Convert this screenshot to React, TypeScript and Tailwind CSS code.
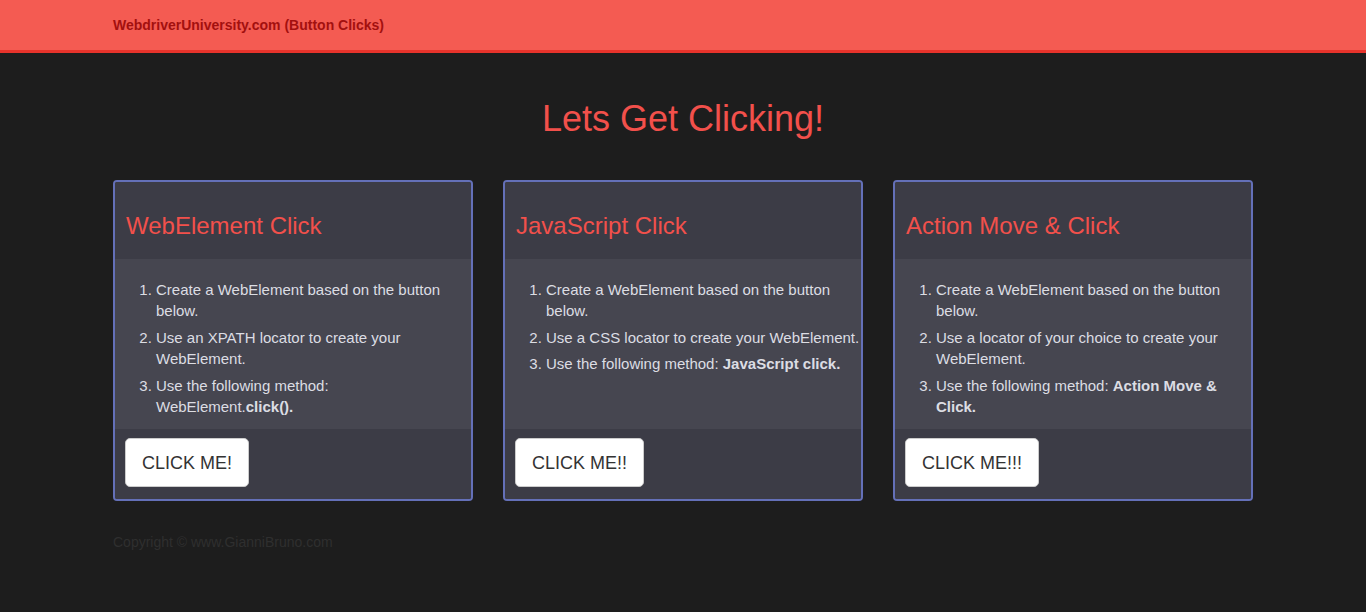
import React from "react";

type Card = {
  title: string;
  items: React.ReactNode[];
  button: string;
};

const cards: Card[] = [
  {
    title: "WebElement Click",
    items: [
      "Create a WebElement based on the button below.",
      "Use an XPATH locator to create your WebElement.",
      <>
        Use the following method:
        <br />
        WebElement.<b>click().</b>
      </>,
    ],
    button: "CLICK ME!",
  },
  {
    title: "JavaScript Click",
    items: [
      "Create a WebElement based on the button below.",
      "Use a CSS locator to create your WebElement.",
      <>
        Use the following method: <b>JavaScript click.</b>
      </>,
    ],
    button: "CLICK ME!!",
  },
  {
    title: "Action Move & Click",
    items: [
      "Create a WebElement based on the button below.",
      "Use a locator of your choice to create your WebElement.",
      <>
        Use the following method: <b>Action Move &amp; Click.</b>
      </>,
    ],
    button: "CLICK ME!!!",
  },
];

export default function App() {
  return (
    <div
      className="min-h-[612px] bg-[#1d1d1d]"
      style={{ fontFamily: '"Liberation Sans", Arial, sans-serif' }}
    >
      <nav className="h-[53px] bg-[#f45b52] border-b-[3px] border-[#e8332b]">
        <div className="w-[1140px] mx-auto h-[50px] flex items-center">
          <span className="text-[14px] font-bold text-[#a3100f]">
            WebdriverUniversity.com (Button Clicks)
          </span>
        </div>
      </nav>

      <div className="w-[1140px] mx-auto">
        <h1 className="text-center text-[36px] leading-[40px] text-[#f2504b] mt-[46px] mb-[41px]">
          Lets Get Clicking!
        </h1>

        <div className="grid grid-cols-3 gap-[30px]">
          {cards.map((c) => (
            <div
              key={c.title}
              className="border-2 border-[#6470b8] rounded-[4px] bg-[#3c3c46] flex flex-col overflow-hidden"
            >
              <div className="h-[77px] pt-[31px] pl-[11px] bg-[#3c3c46]">
                <h2 className="text-[24px] leading-[26px] text-[#f2504b]">{c.title}</h2>
              </div>
              <div className="bg-[#464650] h-[170px] pt-[20px]">
                <ol className="list-decimal pl-[41px] mr-[-2px] text-[15px] leading-[21.43px] text-[#dcdde3]">
                  {c.items.map((it, i) => (
                    <li key={i} className="mb-[5px] [&_b]:font-bold">
                      {it}
                    </li>
                  ))}
                </ol>
              </div>
              <div className="h-[70px] pt-[9px] pl-[10px] bg-[#3c3c46]">
                <button className="h-[49px] px-[16px] bg-white border border-[#cccccc] rounded-[5px] text-[18px] leading-[24px] text-[#333]">
                  {c.button}
                </button>
              </div>
            </div>
          ))}
        </div>

        <p className="mt-[31px] text-[14px] leading-[20px] text-[#2f2f2f]">
          Copyright © www.GianniBruno.com
        </p>
      </div>
    </div>
  );
}
